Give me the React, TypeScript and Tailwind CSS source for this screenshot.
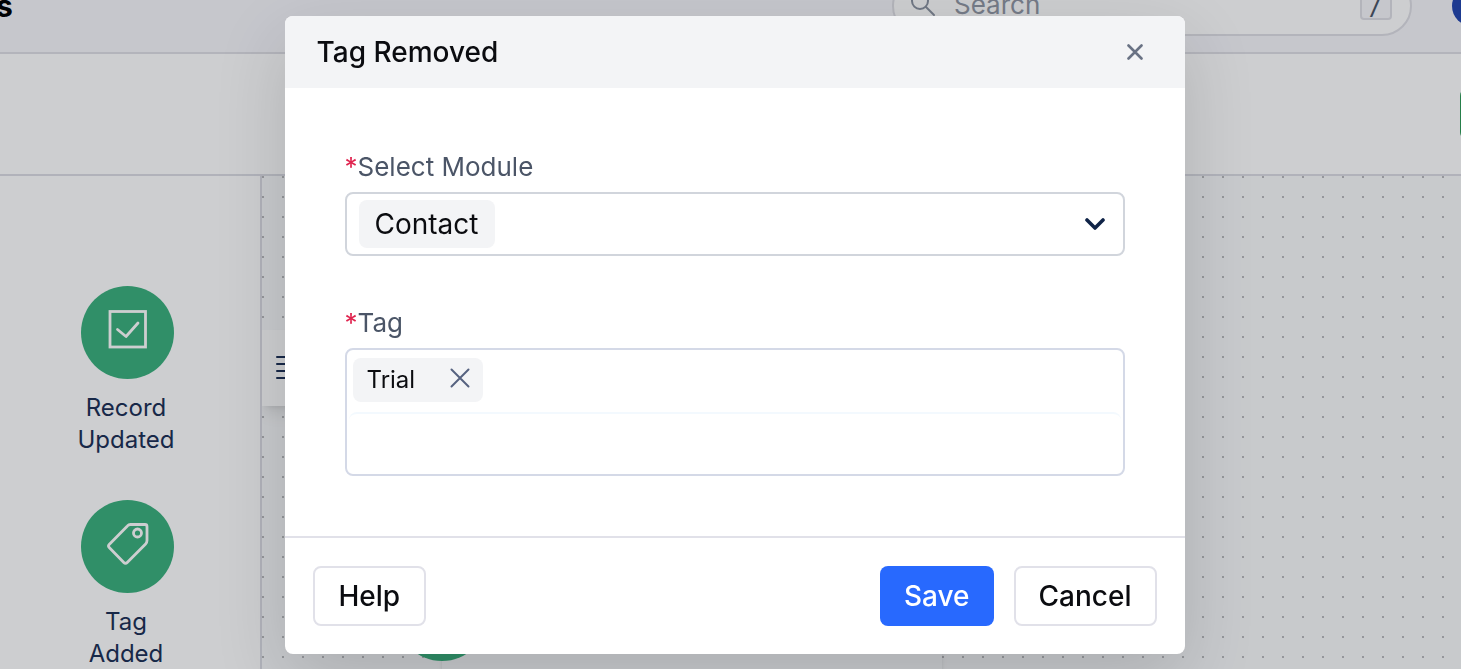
import { ReactNode } from 'react';

const steps = [
  { first: 'Record', second: 'Updated', icon: <CheckIcon /> },
  { first: 'Tag', second: 'Added', icon: <TagIcon /> },
];

function CheckIcon() {
  return (
    <svg width="48" height="48" viewBox="0 0 48 48" fill="none" stroke="white" aria-hidden="true">
      <rect x="7" y="2.5" width="35.5" height="35.5" strokeWidth="2.8" />
      <path d="M14.5 20.5l8.5 7L35 14" strokeWidth="2.8" strokeLinecap="round" strokeLinejoin="round" />
    </svg>
  );
}

function TagIcon() {
  return (
    <svg width="48" height="48" viewBox="0 0 48 48" fill="none" stroke="white" strokeLinejoin="round" aria-hidden="true">
      <path d="M27.5 1.5H42q2 0 2 2V17.5q0 2-1.4 3.4L24.2 39.4q-1.7 1.7-3.4 0L6.2 24.4q-1.4-1.5 0-3L24.4 2.9q1.3-1.4 3.1-1.4z" strokeWidth="2.8" />
      <circle cx="34.5" cy="10" r="4" strokeWidth="2.8" />
    </svg>
  );
}

function CrossIcon({ size, stroke }: { size: number; stroke: number }) {
  return (
    <svg width={size} height={size} viewBox={`0 0 ${size} ${size}`} fill="none" stroke="currentColor" strokeWidth={stroke} strokeLinecap="round" aria-hidden="true">
      <path d={`M1.5 1.5L${size - 1.5} ${size - 1.5}M${size - 1.5} 1.5L1.5 ${size - 1.5}`} />
    </svg>
  );
}

function FieldLabel({ htmlFor, children }: { htmlFor: string; children: ReactNode }) {
  return (
    <label htmlFor={htmlFor} className="mb-2.5 block text-[26px] leading-[30px] text-[#4b5567]">
      <span className="text-[#e0244f]">*</span>
      {children}
    </label>
  );
}

function TopBar() {
  return (
    <header className="-mt-10 flex h-[94px] shrink-0 items-center border-b-2 border-[#dfdfe5] bg-[#f7f7fb]">
      <h1 className="-ml-1 text-[30px] font-bold text-black">s</h1>
      <div className="ml-auto flex h-[60px] w-[520px] items-center rounded-full border-2 border-[#dfdfe5] bg-white pr-[18px] pb-1 pl-4">
        <svg width="26" height="26" viewBox="0 0 26 26" fill="none" stroke="#8b93a1" strokeWidth="2" strokeLinecap="round" aria-hidden="true">
          <circle cx="10" cy="10" r="8" />
          <path d="M16 16l8 8" />
        </svg>
        <input type="search" placeholder="Search" aria-label="Search" className="ml-[18px] min-w-0 flex-1 bg-transparent text-[26px] outline-none placeholder:text-[#9298a5]" />
        <kbd className="flex size-8 items-center justify-center rounded border-2 border-[#dfdfe5] bg-[#f7f7fb] text-[#4b5567]">
          <span className="font-[Inter] text-[28px] leading-8 italic">/</span>
        </kbd>
      </div>
      <div className="-mr-[31px] ml-10 size-10 shrink-0 rounded-full bg-[#2347b0]" />
    </header>
  );
}

function Sidebar() {
  return (
    <aside className="flex w-[262px] shrink-0 flex-col gap-11 border-r-2 border-[#dcdde4] bg-white pt-[110px] pr-1.5">
      {steps.map(step => (
        <div key={step.first} className="flex flex-col items-center gap-[13px] text-center">
          <div className="flex size-[93px] items-center justify-center rounded-full bg-[#3bb17d]">{step.icon}</div>
          <p className="pr-0.5 text-2xl leading-8 text-[#1c3056]">
            {step.first}
            <br />
            {step.second}
          </p>
        </div>
      ))}
    </aside>
  );
}

function Canvas() {
  return (
    <main className="relative flex-1 overflow-hidden bg-[#f9fafb] bg-[linear-gradient(90deg,#f9fafb_18px,transparent_0),linear-gradient(#b9babd_2px,transparent_0)] bg-[length:20px_20px] bg-[position:2px_0,0_0]">
      <button aria-label="Toggle steps" className="absolute top-[154px] left-0 flex h-[76px] w-14 items-center bg-white pl-3.5 shadow-lg">
        <svg width="26" height="24" viewBox="0 0 26 24" stroke="#1c3056" strokeWidth="2" strokeLinecap="round" aria-hidden="true">
          <path d="M1 1h24M1 8h24M1 15h24M1 22h24" />
        </svg>
      </button>
      <div className="absolute top-[393px] left-[180px] h-[180px] w-[500px] bg-[#f9fafb] shadow-md">
        <div className="-ml-[46px] size-[92px] rounded-full bg-[#3bb17d]" />
      </div>
    </main>
  );
}

function TagRemovedDialog() {
  return (
    <div role="dialog" aria-modal="true" aria-labelledby="dialog-title" className="w-full max-w-[900px] self-start overflow-hidden rounded-lg bg-white shadow-[0_24px_72px_rgba(0,0,0,0.14)]">
      <div className="flex h-[72px] items-center justify-between bg-[#f3f4f6] pr-10 pl-8">
        <h2 id="dialog-title" className="text-[28px] font-medium text-[#0b0c10]">Tag Removed</h2>
        <button aria-label="Close" className="p-0.5 text-[#697284]">
          <CrossIcon size={16} stroke={2.6} />
        </button>
      </div>

      <form className="px-[60px] pt-16 pb-[60px]">
        <FieldLabel htmlFor="module">Select Module</FieldLabel>
        <div className="mb-[52px] flex h-16 items-center justify-between rounded-lg border-2 border-[#d1d5dc] pr-[18px] pl-3">
          <select id="module" className="h-12 appearance-none rounded-lg bg-[#f3f4f6] px-4 text-[28px] text-[#0b0c10]">
            <option>Contact</option>
          </select>
          <svg width="20" height="14" viewBox="0 0 20 14" fill="none" stroke="#0f2347" strokeWidth="3.6" strokeLinecap="round" strokeLinejoin="round" aria-hidden="true">
            <path d="M2 3l8 8 8-8" />
          </svg>
        </div>

        <FieldLabel htmlFor="tag">Tag</FieldLabel>
        <div className="rounded-lg border-2 border-[#d4d9e7] p-0.5 pt-2">
          <div className="mb-2.5 ml-1 flex h-11 w-fit items-center gap-[35px] rounded-lg bg-[#f3f4f6] pr-[13px] pl-3.5 text-2xl text-[#0b0c10]">
            Trial
            <button type="button" aria-label="Remove Trial" className="pb-1 text-[#566280]">
              <CrossIcon size={20} stroke={2} />
            </button>
          </div>
          <input id="tag" type="text" className="block h-[60px] w-full rounded-lg border-t-2 border-[#f3f9fe] px-3 text-2xl outline-none" />
        </div>
      </form>

      <div className="flex gap-5 border-t-2 border-[#e1e1e9] p-7 text-[28px] font-medium">
        <button className="mr-auto h-[60px] rounded-lg border-2 border-[#e1e1e9] px-6 text-[#0b0c10]">Help</button>
        <button className="h-[60px] rounded-lg bg-[#2869fe] px-6 text-white">Save</button>
        <button className="h-[60px] rounded-lg border-2 border-[#e1e1e9] px-[23px] text-[#0b0c10]">Cancel</button>
      </div>
    </div>
  );
}

export default function App() {
  return (
    <div className="flex h-screen flex-col overflow-hidden bg-white font-[Inter,sans-serif]">
      <TopBar />
      <div className="flex h-[122px] shrink-0 items-center justify-end border-b-2 border-[#dcdde4]">
        <button aria-label="Publish" className="-mr-[139px] h-[52px] w-[140px] shrink-0 rounded-lg bg-[#2f9d58]" />
      </div>
      <div className="flex min-h-0 flex-1">
        <Sidebar />
        <Canvas />
      </div>

      <div className="fixed inset-0 flex justify-center bg-[#070b12]/20 pt-4 pl-2">
        <TagRemovedDialog />
      </div>
    </div>
  );
}
